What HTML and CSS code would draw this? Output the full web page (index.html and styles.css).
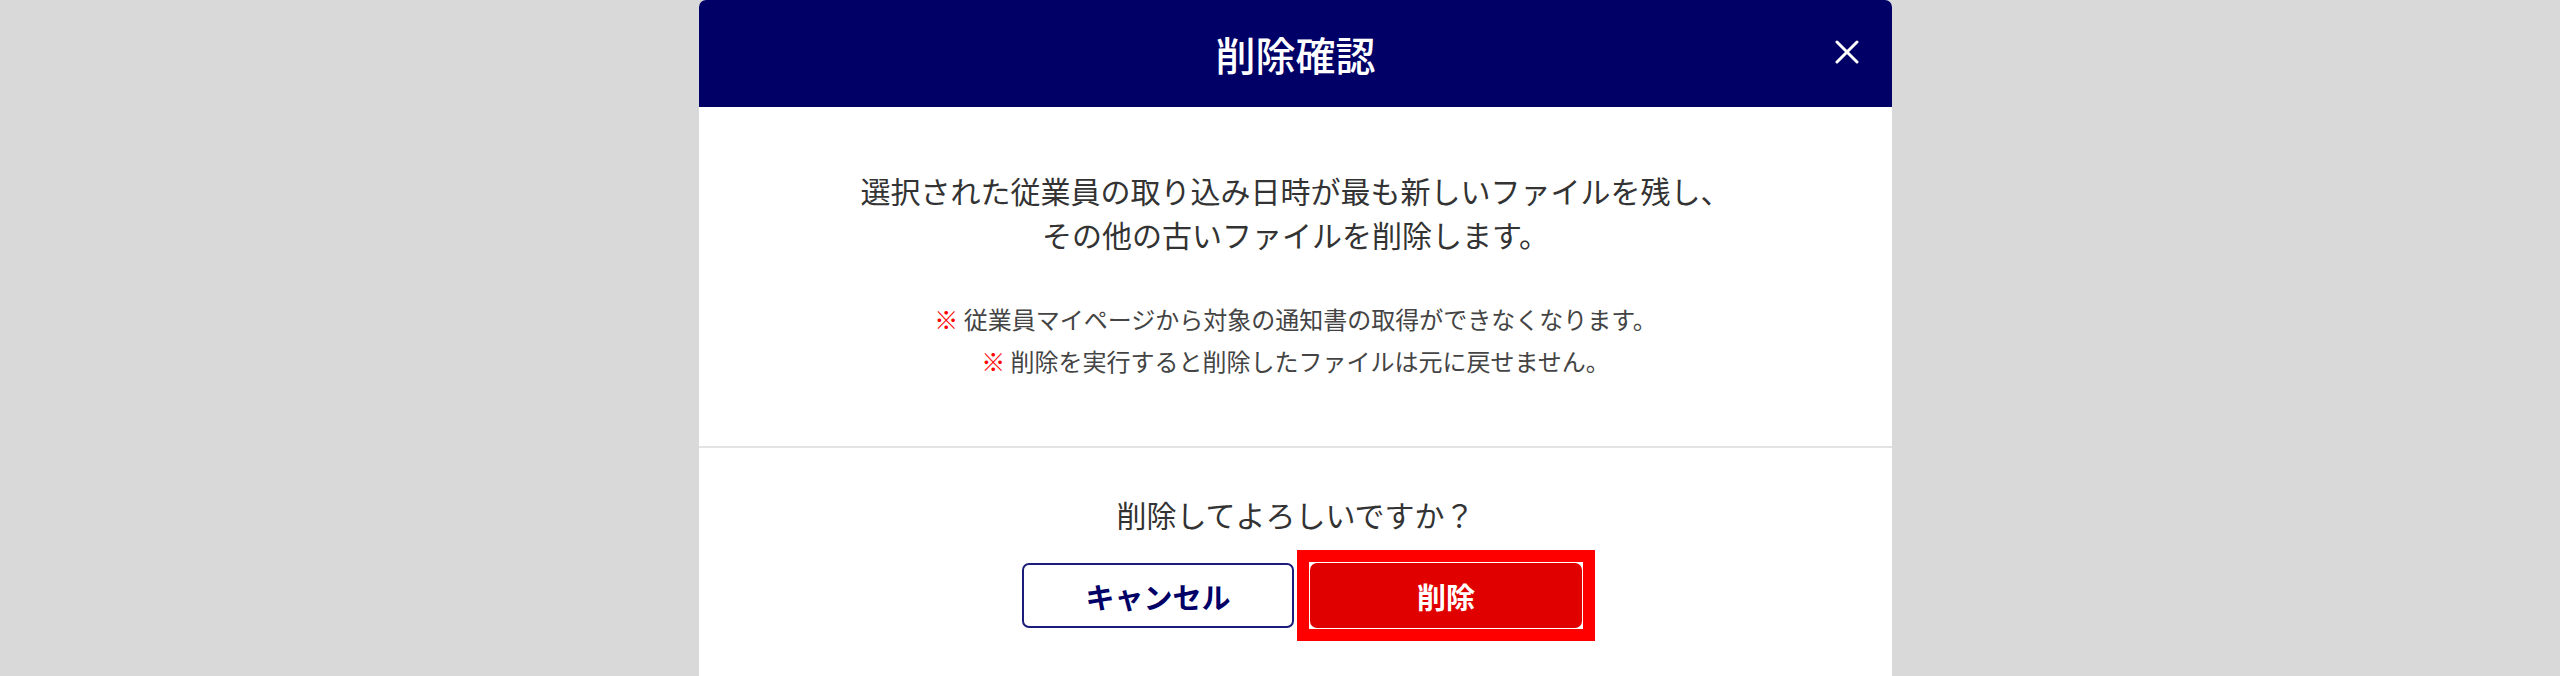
FILE: index.html
```html
<!DOCTYPE html>
<html lang="ja">
<head>
    <meta charset="UTF-8">
    <meta name="viewport" content="width=device-width, initial-scale=1.0">
    <title>削除確認</title>
    <link rel="stylesheet" href="styles.css">
</head>
<body>
    <div class="overlay">
        <div class="modal">
            <div class="modal-header">
                <h2>削除確認</h2>
                <button class="close-btn" aria-label="閉じる">
                    <svg width="24" height="24" viewBox="0 0 24 24">
                        <path d="M2 2 L22 22 M22 2 L2 22" stroke="#fff" stroke-width="3" stroke-linecap="round" fill="none"/>
                    </svg>
                </button>
            </div>

            <div class="modal-body">
                <p class="message">選択された従業員の取り込み日時が最も新しいファイルを残し、<br>その他の古いファイルを削除します。</p>
                <ul class="notes">
                    <li><span class="mark">※</span> 従業員マイページから対象の通知書の取得ができなくなります。</li>
                    <li><span class="mark">※</span> 削除を実行すると削除したファイルは元に戻せません。</li>
                </ul>
            </div>

            <div class="modal-footer">
                <p class="question">削除してよろしいですか？</p>
                <div class="actions">
                    <button class="btn btn-cancel">キャンセル</button>
                    <span class="highlight">
                        <button class="btn btn-delete">削除</button>
                    </span>
                </div>
            </div>
        </div>
    </div>
</body>
</html>
```

FILE: styles.css
```css
html, body {
    margin: 0;
    padding: 0;
    height: 100%;
}
body {
    background-color: #d9d9d9;
    font-family: "Noto Sans CJK JP", "Noto Sans", sans-serif;
    color: #333;
    overflow: hidden;
}
.overlay {
    display: flex;
    justify-content: center;
    padding-left: 31px;
    height: 100%;
}
.modal {
    width: 1193px;
    background-color: #fff;
    border-radius: 7px 7px 0 0;
    overflow: hidden;
}
.modal-header {
    position: relative;
    height: 107px;
    background-color: #000066;
    display: flex;
    align-items: center;
    justify-content: center;
}
.modal-header h2 {
    margin: 0;
    color: #fff;
    font-size: 40px;
    font-weight: 500;
    line-height: 1;
}
.close-btn {
    position: absolute;
    top: 40px;
    right: 33px;
    width: 24px;
    height: 24px;
    padding: 0;
    border: none;
    background: none;
    cursor: pointer;
}
.close-btn svg {
    display: block;
}
.modal-body {
    padding: 61px 20px 64px;
    text-align: center;
    border-bottom: 2px solid #e3e3e3;
}
.message {
    margin: 0;
    font-size: 30px;
    line-height: 44px;
}
.notes {
    list-style: none;
    margin: 42px 0 0;
    padding: 0;
    font-size: 24px;
    line-height: 42px;
    color: #444;
}
.mark {
    color: #ff0000;
}
.modal-footer {
    padding-top: 46px;
    text-align: center;
}
.question {
    margin: 0;
    font-size: 30px;
    line-height: 40px;
}
.actions {
    display: flex;
    justify-content: center;
    gap: 16px;
    margin-top: 29px;
    padding-left: 13px;
}
.btn {
    width: 272px;
    height: 65px;
    border-radius: 7px;
    font-family: "Noto Sans CJK JP", "Noto Sans", sans-serif;
    font-size: 29px;
    font-weight: 700;
    cursor: pointer;
}
.btn-cancel {
    background-color: #fff;
    color: #000066;
    border: 2px solid #1c1c7a;
}
/* red frame drawn round the delete button */
.highlight {
    display: block;
    margin: -13px;
    padding: 1px;
    border: 12px solid #ff0000;
    background-color: #fff;
}
.btn-delete {
    display: block;
    background-color: #e00000;
    color: #fff;
    border: none;
}
```
